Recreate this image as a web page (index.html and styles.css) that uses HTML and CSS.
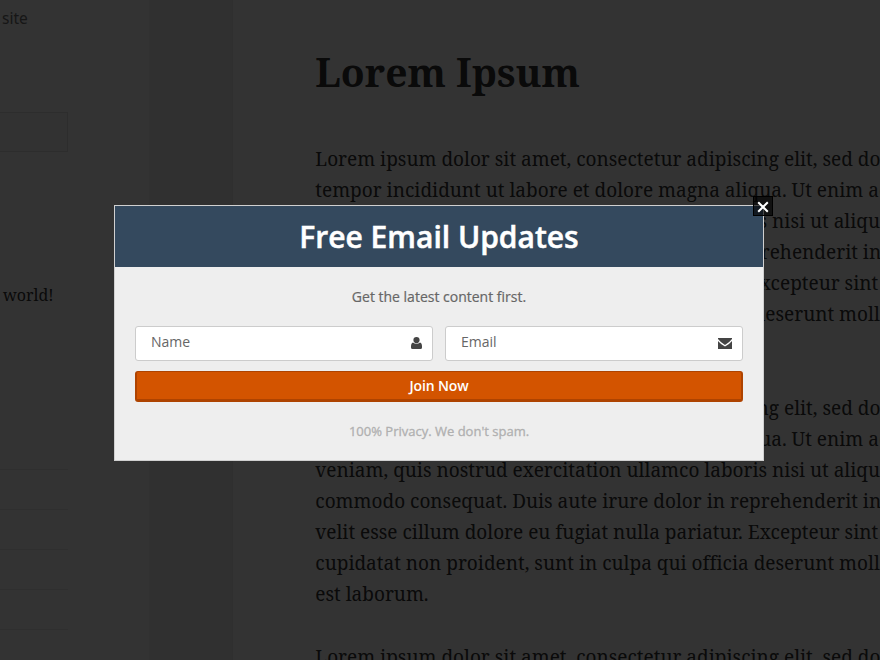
FILE: index.html
```
<!DOCTYPE html>
<html lang="en">
<head>
<meta charset="utf-8">
<title>Lorem Ipsum</title>
<link rel="stylesheet" href="styles.css">
</head>
<body>
<div class="page">
  <aside class="sidebar">
    <p class="tagline">site</p>
    <div class="search"></div>
    <p class="recent">world!</p>
    <ul class="links"><li></li><li></li><li></li><li></li><li></li></ul>
  </aside>
  <div class="gutter"></div>
  <main class="article">
    <h1>Lorem Ipsum</h1>
    <p>Lorem ipsum dolor sit amet, consectetur adipiscing elit, sed do eiusmod<br>tempor incididunt ut labore et dolore magna aliqua. Ut enim ad minim<br>veniam, quis nostrud exercitation ullamco laboris nisi ut aliquip ex ea<br>commodo consequat. Duis aute irure dolor in reprehenderit in voluptate<br>velit esse cillum dolore eu fugiat nulla pariatur. Excepteur sint occaecat<br>cupidatat non proident, sunt in culpa qui officia deserunt mollit anim id<br>est laborum.</p>
    <p>Lorem ipsum dolor sit amet, consectetur adipiscing elit, sed do eiusmod<br>tempor incididunt ut labore et dolore magna aliqua. Ut enim ad minim<br>veniam, quis nostrud exercitation ullamco laboris nisi ut aliquip ex ea<br>commodo consequat. Duis aute irure dolor in reprehenderit in voluptate<br>velit esse cillum dolore eu fugiat nulla pariatur. Excepteur sint occaecat<br>cupidatat non proident, sunt in culpa qui officia deserunt mollit anim id<br>est laborum.</p>
    <p>Lorem ipsum dolor sit amet, consectetur adipiscing elit, sed do eiusmod</p>
  </main>
</div>
<div class="overlay">
  <section class="modal">
    <button class="close" aria-label="Close"><svg width="12" height="12" viewBox="0 0 12 12"><path d="M1.2 1.2l9.600 9.600M10.800 1.2l-9.600 9.600" stroke="#fff" stroke-width="2" fill="none"/></svg></button>
    <header><h2>Free Email Updates</h2></header>
    <div class="body">
      <p class="intro">Get the latest content first.</p>
      <div class="fields">
        <div class="field"><span>Name</span><svg class="user" width="11" height="12" viewBox="0 0 11 12"><path fill="#444" d="M2 5.4Q0 6 0 9.5V10.5Q0 12 1.5 12H9.5Q11 12 11 10.5V9.5Q11 6 9 5.4Q7.5 6.8 5.5 6.8T2 5.4Z"/><circle cx="5.5" cy="3.1" r="3.1" fill="#444"/></svg></div>
        <div class="field"><span>Email</span><svg class="mail" width="14" height="11" viewBox="0 0 14 11"><path fill="#444" d="M0 0H14V1.1Q12 4 7 6.9Q2 4 0 1.1ZM0 3Q2.5 6.2 7 8.5Q11.500 6.2 14 3V11H0Z"/></svg></div>
      </div>
      <button class="join">Join Now</button>
      <p class="privacy">100% Privacy. We don't spam.</p>
    </div>
  </section>
</div>
</body>
</html>
```
FILE: styles.css
```
* { box-sizing: border-box; }
body, h1, h2, p, ul { margin: 0; padding: 0; }
body { height: 660px; overflow: hidden; background: #fff; font-family: "Open Sans", sans-serif; }
.page { display: grid; grid-template-columns: 149px 84px 647px; height: 660px; overflow: hidden; color: #333; }
.sidebar { padding-top: 6px; overflow: hidden; }
.tagline { padding-left: 2px; font: 15.5px/24px "Noto Sans", sans-serif; color: #707070; }
.search { width: 68px; height: 40px; margin-top: 82px; border: 1px solid #e0e0e0; border-left: 0; background: #fafafa; }
.recent { margin-top: 131px; padding-left: 3px; font: 16px/24px "Noto Serif", serif; }
.links { width: 68px; margin-top: 123px; list-style: none; }
.links li { height: 40px; border-bottom: 1px solid #eaeaea; }
.gutter { background: #f1f1f1; border-right: 1px solid #eaeaea; border-left: 1px solid #f5f5f5; }
.article { padding: 48px 0 0 82.3px; white-space: nowrap; font-family: "Noto Serif", serif; font-variant-ligatures: none; }
h1 { margin-bottom: 48px; font-size: 39px; line-height: 48px; }
.article p { margin-bottom: 32px; font-size: 19px; line-height: 31px; }
.overlay { position: absolute; inset: 0; padding: 205px 0 0 114px; background: rgba(0,0,0,.8); }
.modal { position: relative; width: 650px; height: 256px; border: 1px solid #d0d0d0; background: #eee; text-align: center; }
.modal header { height: 61px; background: #34495e; }
h2 { color: #fff; font-size: 30px; line-height: 61px; font-weight: 600; -webkit-text-stroke: 0.5px #fff; }
.close { position: absolute; top: -10px; right: -10px; display: flex; align-items: center; justify-content: center; width: 20px; height: 20px; padding: 2px 0 0; border: 1px solid #000; background: rgba(0,0,0,.65); }
.body { padding: 0 20px; }
.intro { padding-top: 19px; font-size: 14px; line-height: 22px; color: #666; -webkit-text-stroke: 0.2px #666; }
.fields { display: flex; gap: 12px; margin-top: 18px; }
.field { display: flex; flex: 1; justify-content: space-between; height: 35px; padding: 0 10px 0 15px; border: 1px solid #ccc; border-radius: 3px; background: #fff; color: #666; font-size: 14px; line-height: 29px; }
.user { margin-top: 10px; }
.mail { margin-top: 11px; }
.join { display: block; width: 100%; height: 31px; margin-top: 10px; padding: 0; border: solid #ae4300; border-width: 1px 2px 3px; border-radius: 3px; background: #d35400; color: #fff; font: 600 14px/27px "Open Sans", sans-serif; letter-spacing: -0.15px; }
.privacy { margin-top: 19px; color: #b0b0b0; font-size: 13px; line-height: 20px; -webkit-text-stroke: 0.3px #b0b0b0; }
```
